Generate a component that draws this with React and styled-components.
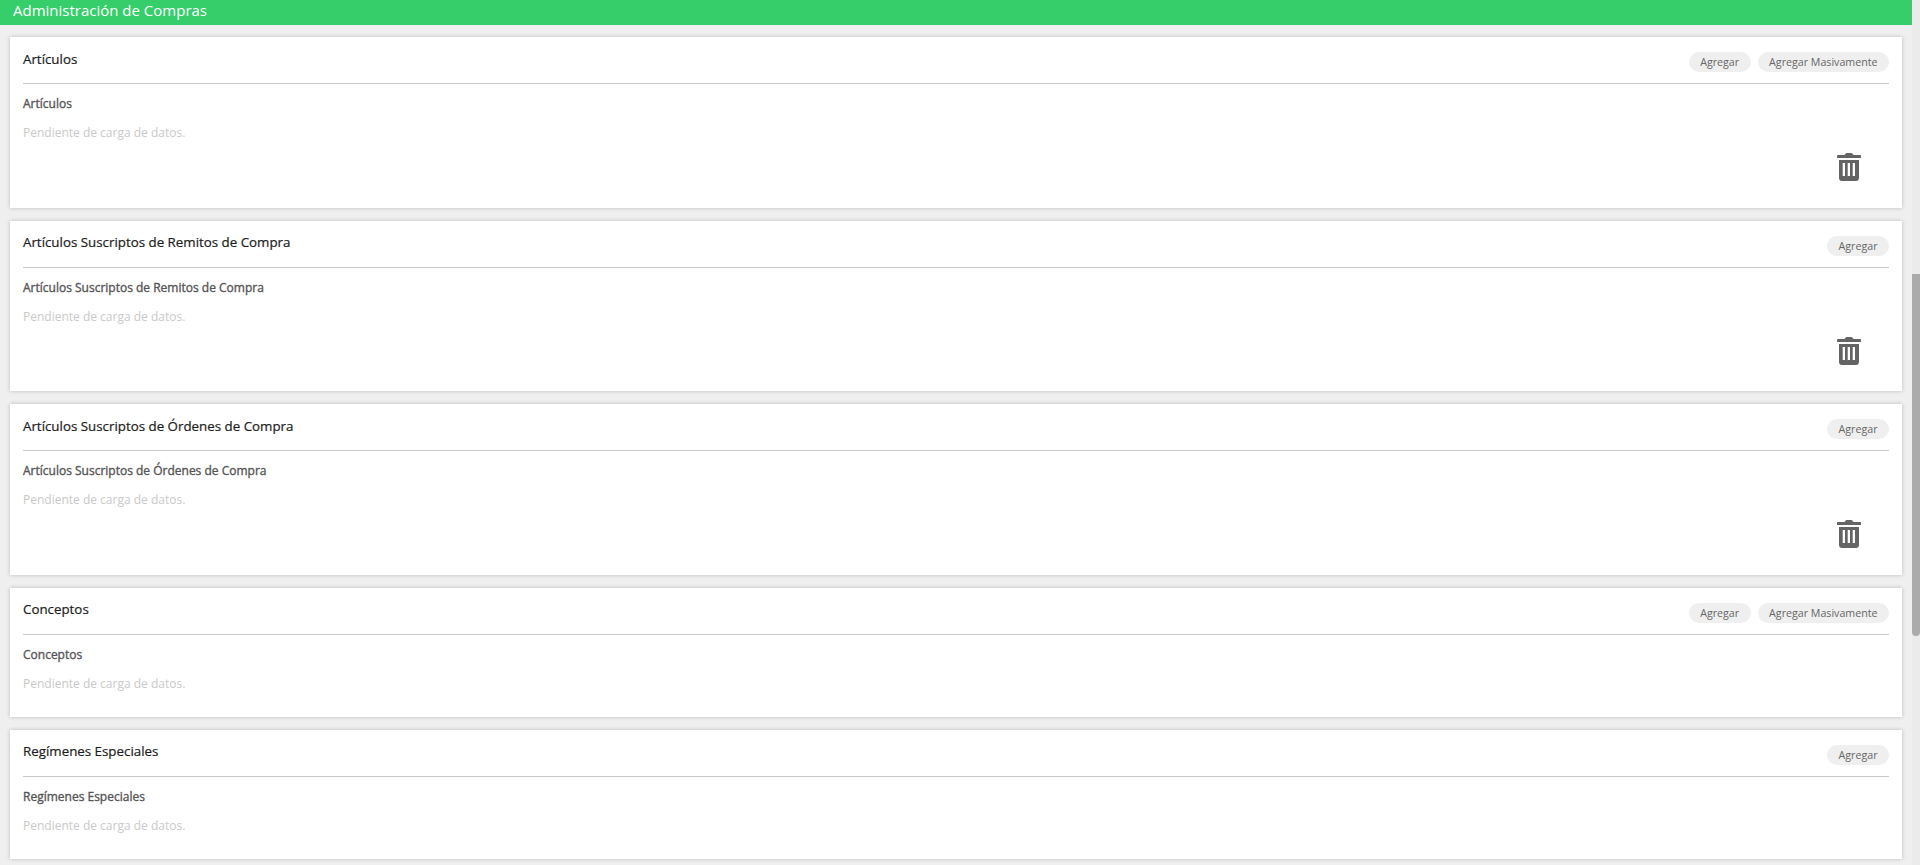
import React from 'react';
import styled, { createGlobalStyle } from 'styled-components';

const GlobalStyle = createGlobalStyle`
	html, body {
		margin: 0;
		height: 865px;
		overflow: hidden;
		background: #efefef;
		font-family: 'Open Sans', sans-serif;
	}
`;

const Page = styled.div`
	display: flex;
	height: 865px;
`;

const Main = styled.div`
	flex: 1;
	min-width: 0;
`;

const TopBar = styled.div`
	height: 25px;
	background: #36ce6a;
	color: #fff;
	font-size: 15px;
	line-height: 21px;
	padding-left: 13px;
`;

const CardList = styled.div`
	display: flex;
	flex-direction: column;
	gap: 13px;
	padding: 12px 10px 0 10px;
`;

const Card = styled.section`
	background: #fff;
	box-shadow: 0 0 4px rgba(0, 0, 0, 0.22);
	padding: 0 13px;
	height: ${(p) => (p.$withDelete ? 170.67 : 129)}px;
	box-sizing: border-box;
	position: relative;
`;

const CardHeader = styled.div`
	display: flex;
	align-items: flex-start;
	justify-content: space-between;
	height: 46px;
	border-bottom: 1px solid #c9c9c9;
`;

const CardTitle = styled.h3`
	margin: 12.5px 0 0 0;
	font-size: 13.33px;
	line-height: 18px;
	font-weight: 400;
	color: #1c1c1c;
	-webkit-text-stroke: 0.2px #1c1c1c;
`;

const Actions = styled.div`
	display: flex;
	gap: 7px;
	margin-top: 15px;
`;

const Pill = styled.button`
	border: none;
	background: #efefef;
	color: #666;
	font-family: inherit;
	font-size: 10.67px;
	height: 20px;
	line-height: 20px;
	padding: 0 11.5px;
	border-radius: 10px;
`;

const SectionLabel = styled.div`
	font-size: 12px;
	font-weight: 400;
	color: #555;
	-webkit-text-stroke: 0.35px #555;
	margin-top: 11px;
	line-height: 18px;
`;

const Pending = styled.div`
	font-size: 12px;
	color: #c9c9c9;
	margin-top: 11px;
	line-height: 18px;
`;

const DeleteButton = styled.div`
	position: absolute;
	right: 41px;
	top: 116px;
	width: 24px;
	height: 28px;
	color: #646464;
`;

const ScrollTrack = styled.div`
	width: 8px;
	flex: none;
	background: #ebebeb;
`;

const ScrollThumb = styled.div`
	margin-top: 274px;
	height: 362px;
	background: #ababab;
	border-radius: 0 0 4px 4px;
`;

const TrashIcon = () => (
	<svg viewBox="0 0 24 28" width="24" height="28" fill="currentColor">
		<path d="M7.500 2 8.500.7C8.800.3 9.200 0 9.800 0h4.400c.6 0 1 .3 1.300.7L16.500 2H23c.6 0 1 .4 1 1v2H0V3c0-.6.4-1 1-1h6.500z" />
		<path
			fillRule="evenodd"
			d="M2 7h20v18c0 1.700-1.300 3-3 3H5c-1.700 0-3-1.300-3-3V7zM5.700 10v13H8V10H5.700zm5 0v13H13V10h-2.300zm5 0v13H18V10h-2.300z"
		/>
	</svg>
);

const sections = [
	{ title: 'Artículos', massive: true, deletable: true },
	{ title: 'Artículos Suscriptos de Remitos de Compra', deletable: true },
	{ title: 'Artículos Suscriptos de Órdenes de Compra', deletable: true },
	{ title: 'Conceptos', massive: true },
	{ title: 'Regímenes Especiales' },
];

const App = () => (
	<>
		<GlobalStyle />
		<Page>
			<Main>
				<TopBar>Administración de Compras</TopBar>
				<CardList>
					{sections.map((section) => (
						<Card key={section.title} $withDelete={section.deletable}>
							<CardHeader>
								<CardTitle>{section.title}</CardTitle>
								<Actions>
									<Pill>Agregar</Pill>
									{section.massive && <Pill>Agregar Masivamente</Pill>}
								</Actions>
							</CardHeader>
							<SectionLabel>{section.title}</SectionLabel>
							<Pending>Pendiente de carga de datos.</Pending>
							{section.deletable && (
								<DeleteButton>
									<TrashIcon />
								</DeleteButton>
							)}
						</Card>
					))}
				</CardList>
			</Main>
			<ScrollTrack>
				<ScrollThumb />
			</ScrollTrack>
		</Page>
	</>
);

export default App;
